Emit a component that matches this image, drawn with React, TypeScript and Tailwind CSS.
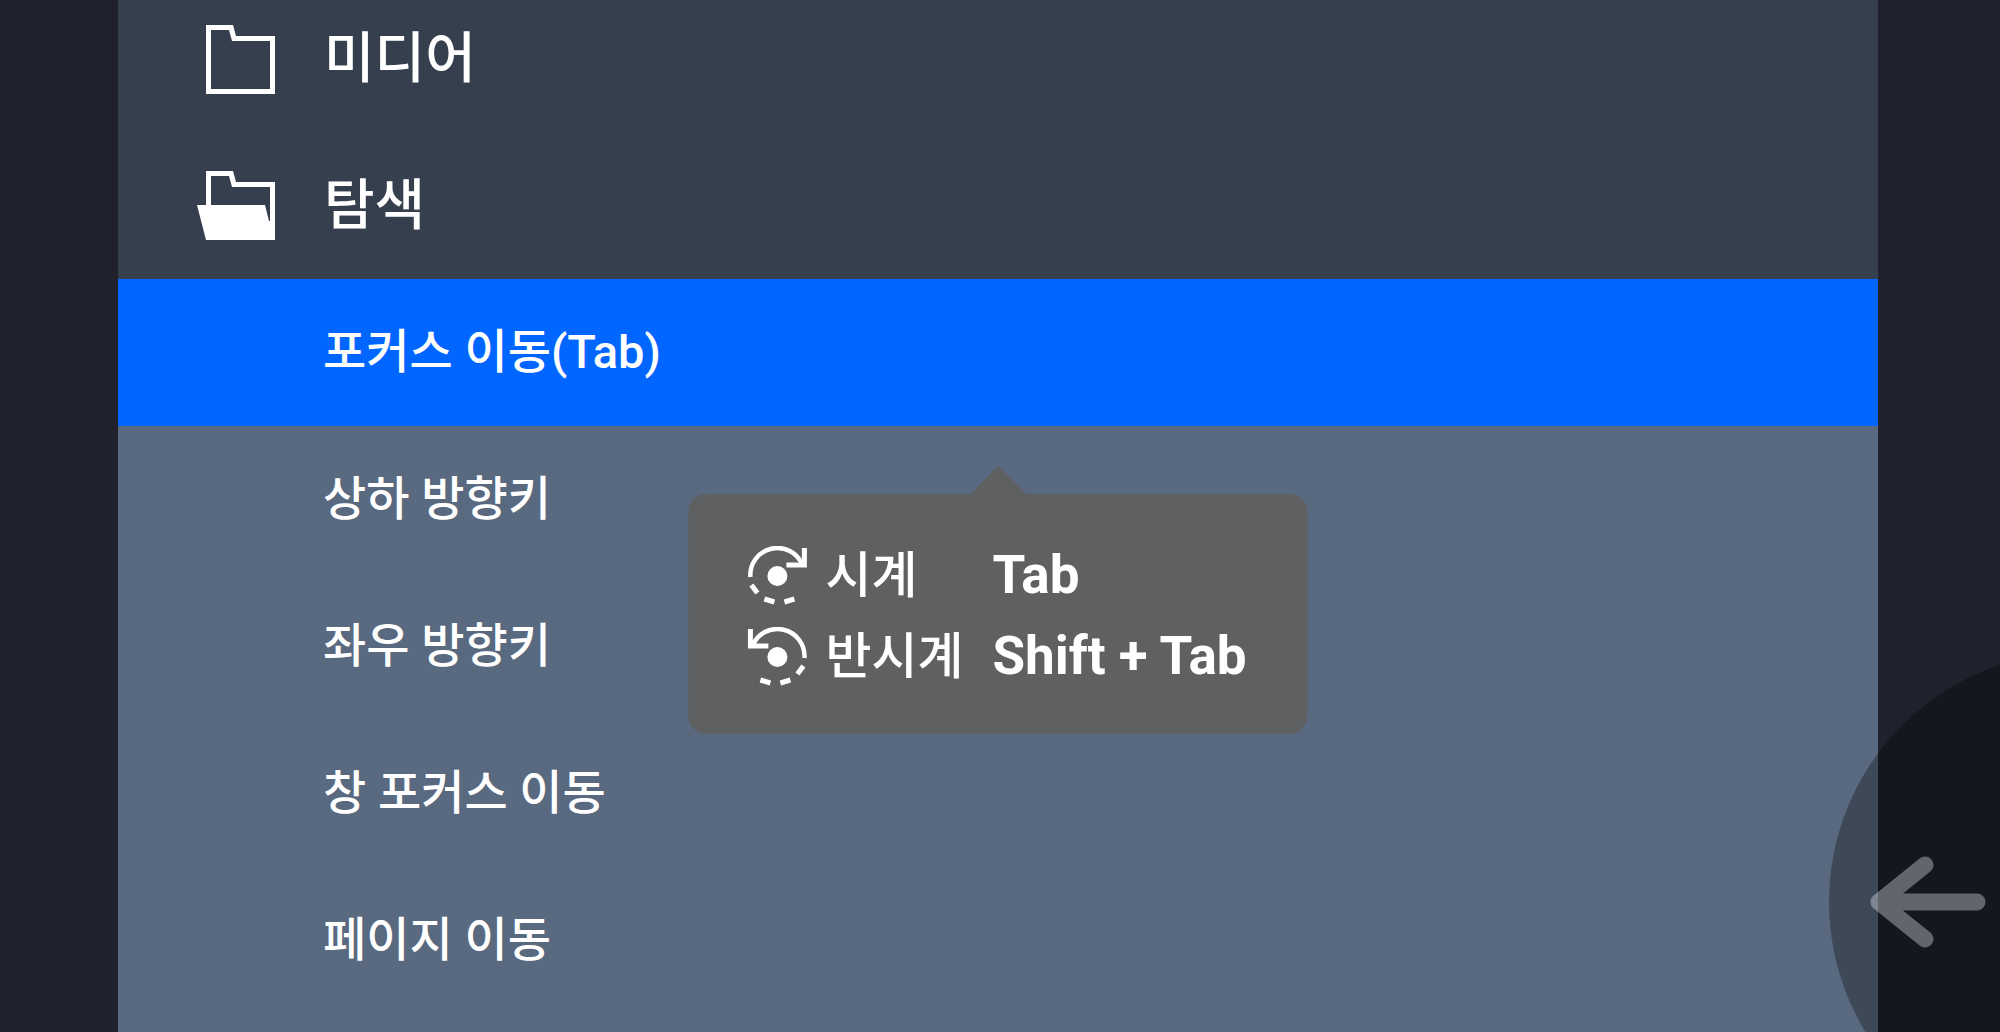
const subItems = ["상하 방향키", "좌우 방향키", "창 포커스 이동", "페이지 이동"];

function ClosedFolder() {
  return (
    <svg viewBox="0 0 80 70" className="h-[70px] w-[80px] shrink-0" fill="white" aria-hidden="true">
      <path fillRule="evenodd" d="M10 1H37L40 12H79V70H10ZM15 6V65H74V17H36L33 6Z" />
    </svg>
  );
}

function OpenFolder() {
  return (
    <svg viewBox="0 0 80 70" className="h-[70px] w-[80px] shrink-0" fill="white" aria-hidden="true">
      <path d="M10 0H37L40 11H79V69H10L1 34H10ZM15 5V34H69L73 50H74V16H36L33 5Z" fillRule="evenodd" />
    </svg>
  );
}

function RotateIcon({ reverse = false }: { reverse?: boolean }) {
  return (
    <svg
      viewBox="0 0 60 60"
      className={reverse ? "size-[60px] -scale-x-100" : "size-[60px]"}
      fill="none"
      stroke="white"
      strokeWidth="5"
      aria-hidden="true"
    >
      <circle cx="30" cy="30" r="10" fill="white" stroke="none" />
      <path d="M3 31A27 27 0 0 1 55 19" strokeWidth="4.500" />
      <path d="M57 2V19H39" />
      <path d="M4 39L10 47M17 53L27 56M37 56L47 53" />
    </svg>
  );
}

function Shortcut() {
  return (
    <div
      role="tooltip"
      className="absolute top-full left-1/2 z-10 mt-[68px] -translate-x-1/2 rounded-[18px] bg-[#5f6062] pt-[41px] pr-[61px] pb-[37px] pl-[59px] text-white"
    >
      <svg viewBox="0 0 56 28" className="absolute bottom-full left-1/2 h-7 w-14 -translate-x-1/2" aria-hidden="true">
        <path d="M0 28L28 0L56 28Z" fill="#5f6062" />
      </svg>
      <dl>
        <div className="flex h-[81px] items-center">
          <dt className="flex w-[245px] items-center gap-[18px] text-[50px] leading-none font-medium whitespace-nowrap">
            <RotateIcon />
            시계
          </dt>
          <dd className="text-[53px] leading-none font-bold whitespace-nowrap">Tab</dd>
        </div>
        <div className="flex h-[81px] items-center">
          <dt className="flex w-[245px] items-center gap-[18px] text-[50px] leading-none font-medium whitespace-nowrap">
            <RotateIcon reverse />
            반시계
          </dt>
          <dd className="text-[53px] leading-none font-bold whitespace-nowrap">Shift + Tab</dd>
        </div>
      </dl>
    </div>
  );
}

export default function App() {
  return (
    <div className="relative h-screen overflow-hidden bg-[#1f212d] pr-[122px] pl-[118px] font-[Roboto,'Noto_Sans_CJK_KR',sans-serif] text-white">
      <main className="-mt-[15px] min-h-[110vh] bg-[#59697f]">
        <div className="bg-[#363f4d]">
          <button className="flex h-[147px] w-full items-center gap-12 pl-[78px] text-left text-[55px] font-medium">
            <ClosedFolder />
            미디어
          </button>
          <button aria-expanded="true" className="flex h-[147px] w-full items-center gap-12 pl-[78px] text-left text-[55px] font-medium">
            <OpenFolder />
            탐색
          </button>
        </div>
        <ul className="text-[47px] font-medium">
          <li className="relative">
            <button className="h-[147px] w-full bg-[#0066ff] pl-[205px] text-left">포커스 이동(Tab)</button>
            <Shortcut />
          </li>
          {subItems.map((label) => (
            <li key={label}>
              <button className="h-[147px] w-full pl-[205px] text-left">{label}</button>
            </li>
          ))}
        </ul>
      </main>
      <button
        aria-label="뒤로"
        className="absolute -right-[329px] -bottom-[120px] flex size-[500px] items-center rounded-full bg-black/30 pl-[40px]"
      >
        <svg viewBox="0 0 120 100" className="h-[100px] w-[120px] opacity-35" fill="none" stroke="#f4f5ff" strokeWidth="17" strokeLinecap="round" strokeLinejoin="round" aria-hidden="true">
          <path d="M56 13L10 50L56 87M10 50H108" />
        </svg>
      </button>
    </div>
  );
}
